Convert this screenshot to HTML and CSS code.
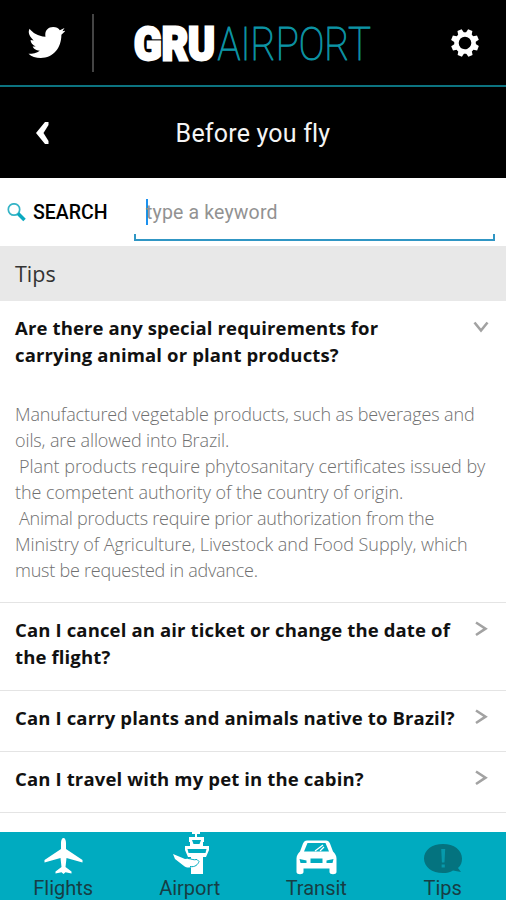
FILE: index.html
```html
<!DOCTYPE html>
<html lang="en">
<head>
  <meta charset="UTF-8">
  <title>GRU Airport - Before you fly</title>
  <link rel="stylesheet" href="styles.css">
</head>
<body>

  <header class="header">
    <svg class="twitter" viewBox="0 0 36 30">
      <path d="M1.500 1.500c3 4 8 7 15.500 8C16 4 19 0 24.500 0c3 0 5 1 6.500 3l4.500-2-2 3 3-.5-4 4c0 13-8 22.500-20 22.500-5 0-9-1-12-4 4 0 8-.5 11-3-4 0-6-2-7-4h3c-3-1.500-5-4-5-6.500l3 .5C1.500 9-.5 6 1.500 1.500z" fill="#fff"/>
    </svg>
    <span class="divider"></span>
    <svg class="logo" viewBox="0 0 244 84">
      <text class="logo-gru" x="0" y="58.500" textLength="81" lengthAdjust="spacingAndGlyphs">GRU</text>
      <text class="logo-airport" x="83.500" y="58.500" textLength="153.500" lengthAdjust="spacingAndGlyphs">AIRPORT</text>
    </svg>
    <svg class="gear" viewBox="-15 -15 30 30">
      <g fill="#fff" transform="rotate(22)">
        <path d="M-3.300-9l1-5h4.600l1 5v18l-1 5h-4.600l-1-5z"/>
        <path d="M-3.300-9l1-5h4.600l1 5v18l-1 5h-4.600l-1-5z" transform="rotate(45)"/>
        <path d="M-3.300-9l1-5h4.600l1 5v18l-1 5h-4.600l-1-5z" transform="rotate(90)"/>
        <path d="M-3.300-9l1-5h4.600l1 5v18l-1 5h-4.600l-1-5z" transform="rotate(135)"/>
        <circle r="10.800"/>
        <circle r="6.300" fill="#000"/>
      </g>
    </svg>
  </header>

  <div class="title-bar">
    <svg class="back" viewBox="0 0 13 22"><path d="M0 11L9 0h3.500v3L7.500 11l5 8v3H9z" fill="#fff"/></svg>
    <h1>Before you fly</h1>
  </div>

  <form class="search">
    <svg class="search-icon" viewBox="0 0 19 19">
      <circle cx="7" cy="6.500" r="5.700" fill="none" stroke="#35b4c6" stroke-width="1.700"/>
      <path d="M11 10.500l6.500 6.500" stroke="#0aa9c0" stroke-width="3.600"/>
    </svg>
    <label>SEARCH</label>
    <div class="field"><span class="caret"></span><span class="placeholder">type a keyword</span></div>
  </form>

  <h2 class="section">Tips</h2>

  <main class="tips">
    <article class="tip">
      <div class="question">
        <h3>Are there any special requirements for<br>carrying animal or plant products?</h3>
        <svg class="arrow" viewBox="0 0 16 16"><path d="M1.500 3.500L8 11.500l6.500-8"/></svg>
      </div>
      <p class="answer">
        <span>Manufactured vegetable products, such as beverages and</span>
        <span>oils, are allowed into Brazil.</span>
        <span class="wide indent">Plant products require phytosanitary certificates issued by</span>
        <span class="wide">the competent authority of the country of origin.</span>
        <span class="tight indent">Animal products require prior authorization from the</span>
        <span class="wide">Ministry of Agriculture, Livestock and Food Supply, which</span>
        <span class="tight">must be requested in advance.</span>
      </p>
    </article>
    <article class="tip">
      <div class="question">
        <h3>Can I cancel an air ticket or change the date of<br>the flight?</h3>
        <svg class="arrow" viewBox="0 0 16 16"><path d="M3 1.500l9.500 6.200L3 14"/></svg>
      </div>
    </article>
    <article class="tip">
      <div class="question">
        <h3>Can I carry plants and animals native to Brazil?</h3>
        <svg class="arrow" viewBox="0 0 16 16"><path d="M3 1.500l9.500 6.200L3 14"/></svg>
      </div>
    </article>
    <article class="tip">
      <div class="question">
        <h3>Can I travel with my pet in the cabin?</h3>
        <svg class="arrow" viewBox="0 0 16 16"><path d="M3 1.500l9.500 6.200L3 14"/></svg>
      </div>
    </article>
  </main>

  <nav class="tabs">
    <a class="tab">
      <svg viewBox="0 0 44 44">
        <path d="M22.500 6c1.500 0 2.500 2 2.500 5v6l16.500 11v2.500l-16-4.500-1 9 6 4.500V41.500l-6-1.200-2 1.700-2-1.700-6 1.200v-2l6-4.500-1-9-16 4.500V28L20 17v-6c0-3 1-5 2.500-5z" fill="#fff"/>
      </svg>
      <span>Flights</span>
    </a>
    <a class="tab">
      <svg viewBox="0 0 44 44">
        <path d="M24 0h8v2h-3v3h7v5h-1v4h6v4l-3 7h-3v17H23V25h-3l-3-7v-4h5v-4h-1V5h6V2h-3z" fill="#fff"/>
        <path d="M24 8h9l-1.500 4h-6zM19.500 17h19l-1 4h-17z" fill="#00abc0"/>
        <path d="M5 22l12 5c4-1 9-1 13 2l-1 3c-3 3-9 5-13 2L7 27z" fill="#fff"/>
        <path d="M20 26.500c3 0 5 2 9 1l2 2m-9 5c5 1 8-2 9-5" fill="none" stroke="#00abc0" stroke-width="1"/>
      </svg>
      <span>Airport</span>
    </a>
    <a class="tab">
      <svg viewBox="0 0 44 44">
        <path d="M13 8.500h19c2 0 3 1 4 3l3 8c2 2 3.500 4 3.500 7V40c0 3-7 3-7 0v-3.500h-26V40c0 3-7 3-7 0V26.500c0-3 1.500-5 3.500-7l3-8c1-2 2-3 4-3z" fill="#fff"/>
        <path d="M13.500 11h18l3.500 8.500H10zM16.500 26.500h12V31h-12zM5.500 27l7 1.500V31h-6zM39.500 27l-7 1.500V31h6z" fill="#00abc0"/>
        <path d="M21 19l8-6m-3 6l4-4" stroke="#fff" stroke-width="1.200"/>
      </svg>
      <span>Transit</span>
    </a>
    <a class="tab active">
      <svg viewBox="0 0 44 44">
        <path d="M22 12c11 0 19 6 19 14.500 0 4-1 7-4 9.500l3 4-8-1.500C29 40.500 26 41 22 41 11 41 3 35 3 26.500S11 12 22 12z" fill="#04737f"/>
        <path d="M20.200 17h4l-.7 13.500h-2.600zM20.600 32.500h3.200v3h-3.200z" fill="#079aac"/>
      </svg>
      <span>Tips</span>
    </a>
  </nav>

</body>
</html>
```
FILE: styles.css
```css
* {
  box-sizing: border-box;
}

body {
  margin: 0;
  height: 900px;
  display: flex;
  flex-direction: column;
  overflow: hidden;
  background: #fff;
  color: #111;
  font-family: "Open Sans", sans-serif;
}

h1, h2, h3, p {
  margin: 0;
  font-weight: 400;
}

svg {
  display: block;
  flex: none;
}

.header {
  height: 87px;
  flex: none;
  display: flex;
  align-items: center;
  padding: 0 26px 0 28px;
  background: #000;
  border-bottom: 2px solid #0c7380;
}

.twitter {
  width: 37px;
  height: 31px;
}

.divider {
  width: 2px;
  height: 58px;
  margin: 1px 40px 0 27px;
  background: #444;
}

.logo {
  width: 244px;
  height: 84px;
  overflow: visible;
}

.logo-gru {
  font: 900 46px Roboto, sans-serif;
  fill: #fff;
  stroke: #fff;
  stroke-width: 2.800px;
}

.logo-airport {
  font: 100 47px Roboto, sans-serif;
  fill: #0d94a4;
  stroke: #0d94a4;
  stroke-width: 1px;
}

.gear {
  width: 30px;
  height: 30px;
  margin-left: auto;
}

.title-bar {
  height: 91px;
  flex: none;
  display: grid;
  grid-template-columns: 60px 1fr 60px;
  align-items: center;
  background: #000;
  color: #f4f4f4;
}

.back {
  width: 13px;
  height: 22px;
  margin-left: 36px;
}

.title-bar h1 {
  padding-top: 2px;
  font: 400 25px Roboto, sans-serif;
  letter-spacing: 0.2px;
  text-align: center;
}

.search {
  height: 68px;
  flex: none;
  display: flex;
  align-items: center;
  padding: 0 11px 0 7px;
}

.search-icon {
  width: 19px;
  height: 19px;
}

.search label {
  width: 101px;
  margin-left: 7px;
  font: 500 19.500px Roboto, sans-serif;
  color: #000;
}

.field {
  flex: 1;
  align-self: flex-end;
  height: 50px;
  margin-bottom: 5px;
  padding: 1px 0 7px 12px;
  display: flex;
  align-items: center;
  border-bottom: 2px solid #3096c4;
  background:
    linear-gradient(#3096c4, #3096c4) left bottom / 2px 5px no-repeat,
    linear-gradient(#3096c4, #3096c4) right bottom / 2px 5px no-repeat;
}

.caret {
  width: 2px;
  height: 26px;
  margin-right: -2px;
  background: #1c91ef;
}

.placeholder {
  font: 400 19.500px Roboto, sans-serif;
  letter-spacing: 0.150px;
  color: #929292;
}

.section {
  height: 55px;
  flex: none;
  padding-left: 15px;
  background: #e8e8e8;
  color: #333;
  font-size: 21.500px;
  line-height: 55px;
}

.tips {
  flex: 1;
  min-height: 0;
  overflow: hidden;
}

.tip {
  padding: 13px 15px 20px;
  border-bottom: 1px solid #e4e4e4;
}

.tip:first-child {
  padding-bottom: 19px;
}

.question {
  display: flex;
  justify-content: space-between;
}

h3 {
  font-size: 18.500px;
  font-weight: 700;
  letter-spacing: 0.140px;
  line-height: 27px;
  white-space: nowrap;
}

.arrow {
  width: 16px;
  height: 16px;
  margin: 5px 2px 0 0;
  fill: none;
  stroke: #a2a2a2;
  stroke-width: 2.600px;
}

.answer {
  margin-top: 33px;
  color: #707070;
  font-size: 18px;
  font-weight: 300;
  letter-spacing: -0.120px;
  line-height: 26px;
  white-space: nowrap;
}

.answer span {
  display: block;
}

.answer .wide {
  letter-spacing: -0.040px;
}

.answer .tight {
  letter-spacing: -0.230px;
}

.answer .indent {
  padding-left: 4px;
}

.tabs {
  height: 68px;
  flex: none;
  display: grid;
  grid-template-columns: repeat(4, 1fr);
  background: #00abc0;
}

.tab {
  display: flex;
  flex-direction: column;
  align-items: center;
  color: #173e45;
  font: 400 20px/24px Roboto, sans-serif;
}

.tab svg {
  width: 44px;
  height: 44px;
}
```
